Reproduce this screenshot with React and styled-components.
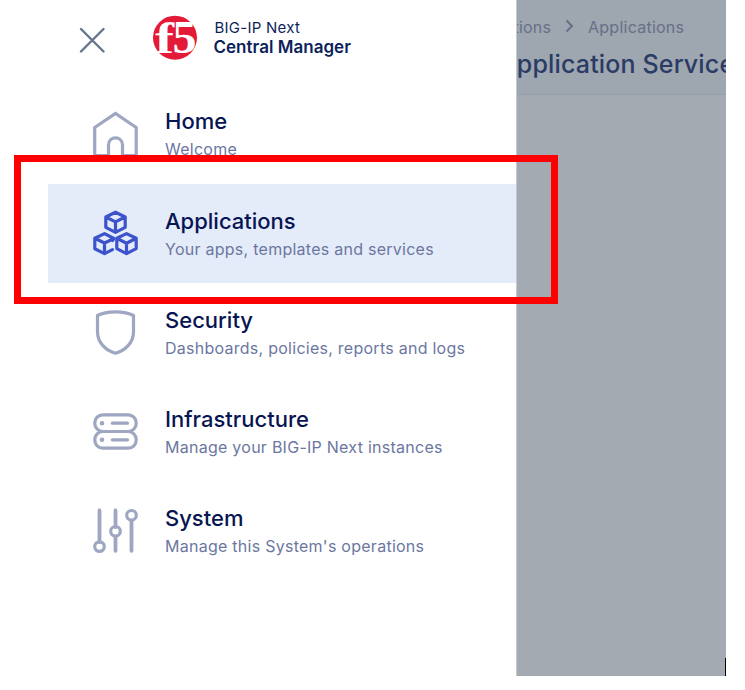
import React from 'react';
import styled, { createGlobalStyle } from 'styled-components';

const GlobalStyle = createGlobalStyle`
  * { box-sizing: border-box; }
  body { margin: 0; background: #fff; font-family: Inter, sans-serif; }
`;

const Screen = styled.div`
  position: relative;
  display: flex;
  width: 726px;
  height: 676px;
  overflow: hidden;
  background: #fff;
`;

const Drawer = styled.aside`
  flex: 0 0 516px;
  display: flex;
  flex-direction: column;
  background: #fff;
`;

const DrawerHeader = styled.header`
  height: 85px;
  display: flex;
  padding: 15px 0 0 79px;
`;

const CloseButton = styled.button`
  width: 26px;
  height: 26px;
  margin: 12px 47px 0 0;
  padding: 0;
  border: 0;
  background: none;
  svg { display: block; }
`;

const Logo = styled.svg`
  display: block;
  width: 46px;
  height: 46px;
  overflow: visible;
`;

const Brand = styled.div`
  margin: 3px 0 0 16px;
  color: #0e1f5b;
  white-space: nowrap;
`;

const BrandLine = styled.div`
  font-size: ${(p) => (p.$strong ? '17px' : '15px')};
  font-weight: ${(p) => (p.$strong ? 600 : 400)};
  letter-spacing: ${(p) => (p.$strong ? '0.02px' : '0.25px')};
  line-height: ${(p) => (p.$strong ? '20px' : '19px')};
  margin-left: ${(p) => (p.$strong ? '-0.5px' : '0.5px')};
`;

const Menu = styled.nav`
  display: flex;
  flex-direction: column;
  padding-left: 48px;
`;

const MenuItem = styled.a`
  display: flex;
  height: 99px;
  padding: 25px 0 0 44px;
  background: ${(p) => (p.$active ? '#e4ebf9' : 'transparent')};
`;

const ItemIcon = styled.svg`
  flex: 0 0 47px;
  width: 47px;
  height: 47px;
  margin-top: ${(p) => (p.$raised ? '1px' : '2px')};
  fill: none;
  stroke: ${(p) => (p.$active ? '#3d53cb' : '#9ea6c2')};
  stroke-width: 3.2;
  stroke-linejoin: round;
  stroke-linecap: round;
`;

const ItemText = styled.div`
  margin: ${(p) => (p.$raised ? '-1px' : '0')} 0 0 26px;
  white-space: nowrap;
`;

const ItemTitle = styled.div`
  font-size: 22px;
  font-weight: 500;
  line-height: 24px;
  letter-spacing: 0;
  color: #071553;
`;

const ItemNote = styled.div`
  margin-top: 7px;
  font-size: 16px;
  line-height: 18px;
  letter-spacing: 0.26px;
  color: #6c779f;
`;

const Backdrop = styled.main`
  flex: 1;
  min-width: 0;
  overflow: hidden;
  background: #a3aab2;
  border-left: 1px solid #c5cad0;
`;

const PageHeader = styled.header`
  height: 95px;
  padding-top: 17px;
  background: #9ea6af;
  border-bottom: 1px solid #959eac;
  white-space: nowrap;
`;

const Breadcrumb = styled.div`
  display: flex;
  align-items: center;
  height: 20px;
  margin-left: -62px;
  font-size: 16px;
  letter-spacing: 0.25px;
  color: #667087;
  svg { margin: 0 14px 2px; }
`;

const Crumb = styled.span`
  width: ${(p) => p.$width};
  text-align: right;
`;

const PageTitle = styled.h1`
  margin: 11px 0 0 -18px;
  font-size: 25px;
  font-weight: 500;
  line-height: 32px;
  letter-spacing: 0.15px;
  color: #2a3b66;
`;

const Highlight = styled.div`
  position: absolute;
  left: 14px;
  top: 155px;
  width: 544px;
  height: 149px;
  border: 7px solid #f00;
`;

const Caret = styled.div`
  position: absolute;
  right: 0;
  bottom: 0;
  width: 1px;
  height: 18px;
  background: #000;
`;

const Cube = ({ x, y }) => (
  <g transform={`translate(${x} ${y})`}>
    <path d="M0 -10 L9.7 -5.3 V5 L0 10 L-9.7 5 V-5.3Z M-9.7 -5.3 L0 -0.4 L9.7 -5.3 M0 -0.4 V10" />
  </g>
);

const drawings = {
  home: <path strokeLinejoin="miter" d="M2.7 16.5 L23.5 2.5 L44.2 16.5 V44.5 H30.5 V34 C30.5 24.5 16.5 24.5 16.5 34 V44.5 H2.7Z" />,
  apps: (
    <>
      <Cube x={23.5} y={12.3} />
      <path d="M20.5 30.5 L22 28.5 L12.5 23.6 L2.8 28.3 V38.8 L12.5 43.6 L20.5 39.6 M2.8 28.3 L12.5 33 L21 29 M12.5 33 V43.6" />
      <Cube x={34.5} y={33.6} />
    </>
  ),
  shield: <path d="M23.5 1.8 C31 1.8 37 3 41.5 5.5 V22 C41.5 33 32.5 41 23.5 43.2 C14.5 41 5.5 33 5.5 22 V5.5 C10 3 16 1.8 23.5 1.8Z" />,
  servers: (
    <>
      <rect x="2.8" y="5.8" width="41.4" height="16.7" rx="8" />
      <rect x="2.8" y="22.5" width="41.4" height="16.7" rx="8" />
      <path d="M20.3 14.2 H35.5 M20.3 30.8 H35.5" />
      <path strokeWidth="4.6" d="M10 14.2 h.01 M10 30.8 h.01" />
    </>
  ),
  sliders: (
    <>
      <path strokeWidth="3.8" d="M7.5 2.5 V34 M23.5 2.5 V19 M23.5 29.5 V42.8 M39.5 13 V42.8" />
      <circle cx="7.5" cy="38.6" r="4.8" />
      <circle cx="23.5" cy="23.3" r="4.8" />
      <circle cx="39.5" cy="7.3" r="4.8" />
    </>
  ),
};

const items = [
  { icon: 'home', title: 'Home', note: 'Welcome', iconRaised: true, textRaised: true },
  { icon: 'apps', title: 'Applications', note: 'Your apps, templates and services', active: true, iconRaised: true },
  { icon: 'shield', title: 'Security', note: 'Dashboards, policies, reports and logs' },
  { icon: 'servers', title: 'Infrastructure', note: 'Manage your BIG-IP Next instances' },
  { icon: 'sliders', title: 'System', note: "Manage this System's operations" },
];

export default function App() {
  return (
    <>
      <GlobalStyle />
      <Screen>
        <Drawer>
          <DrawerHeader>
            <CloseButton aria-label="Close">
              <svg width="26" height="26" viewBox="0 0 26 26" stroke="#66758c" strokeWidth="2.4" strokeLinecap="round">
                <path d="M2 2 L24.5 24.5 M24.5 2 L2 24.5" />
              </svg>
            </CloseButton>
            <Logo viewBox="0 0 46 46">
              <circle cx="23" cy="22.7" r="22" fill="#e31b38" />
              <g fill="#fff" fontFamily="Liberation Serif, serif" fontWeight="700">
                <text x="3" y="38" fontSize="44" textLength="19" lengthAdjust="spacingAndGlyphs">f</text>
                <text x="20.5" y="38" fontSize="46" textLength="24" lengthAdjust="spacingAndGlyphs">5</text>
              </g>
            </Logo>
            <Brand>
              <BrandLine>BIG-IP Next</BrandLine>
              <BrandLine $strong>Central Manager</BrandLine>
            </Brand>
          </DrawerHeader>
          <Menu>
            {items.map((item) => (
              <MenuItem key={item.title} $active={item.active}>
                <ItemIcon viewBox="0 0 47 47" $active={item.active} $raised={item.iconRaised}>
                  {drawings[item.icon]}
                </ItemIcon>
                <ItemText $raised={item.textRaised}>
                  <ItemTitle>{item.title}</ItemTitle>
                  <ItemNote>{item.note}</ItemNote>
                </ItemText>
              </MenuItem>
            ))}
          </Menu>
        </Drawer>
        <Backdrop>
          <PageHeader>
            <Breadcrumb>
              <Crumb $width="96px">Applications</Crumb>
              <svg width="9" height="14" viewBox="0 0 9 14" fill="none" stroke="#667087" strokeWidth="2">
                <path d="M1.5 1.5 L7 7 L1.5 12.5" />
              </svg>
              <Crumb>Applications</Crumb>
            </Breadcrumb>
            <PageTitle>Application Services</PageTitle>
          </PageHeader>
        </Backdrop>
        <Highlight />
        <Caret />
      </Screen>
    </>
  );
}
